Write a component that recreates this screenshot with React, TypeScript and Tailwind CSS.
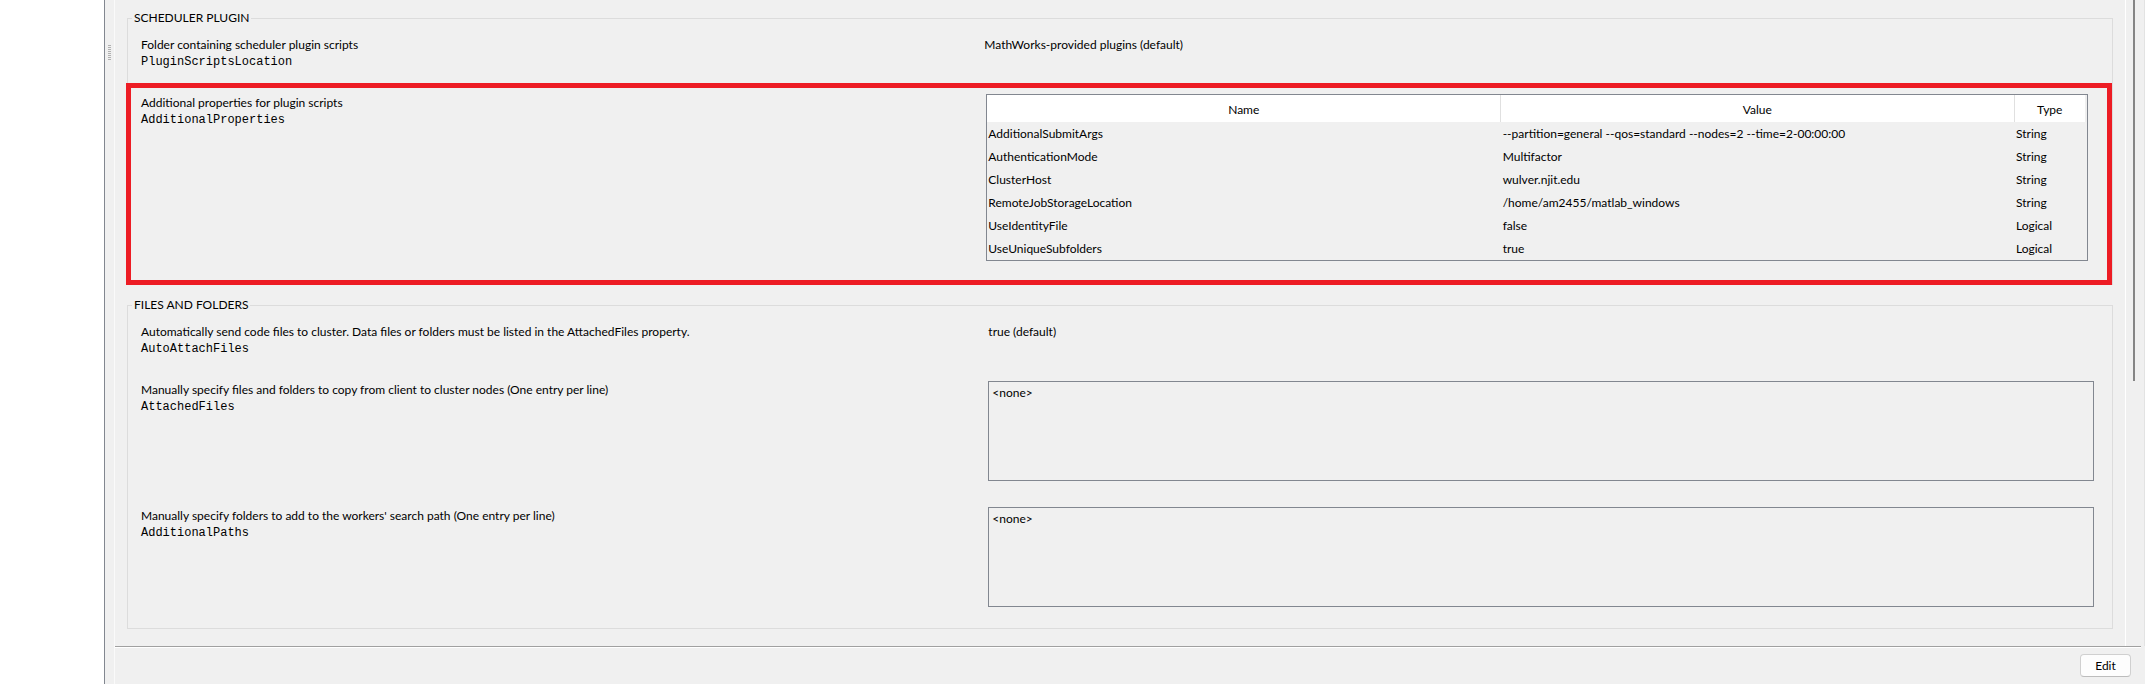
import type { ReactNode } from 'react';

const properties = [
  ['AdditionalSubmitArgs', '--partition=general --qos=standard --nodes=2 --time=2-00:00:00', 'String'],
  ['AuthenticationMode', 'Multifactor', 'String'],
  ['ClusterHost', 'wulver.njit.edu', 'String'],
  ['RemoteJobStorageLocation', '/home/am2455/matlab_windows', 'String'],
  ['UseIdentityFile', 'false', 'Logical'],
  ['UseUniqueSubfolders', 'true', 'Logical'],
];

function Caption({ text, name, htmlFor }: { text: string; name: string; htmlFor?: string }) {
  const content = (
    <>
      <span className="block">{text}</span>
      <span className="block pt-px font-['Liberation_Mono',monospace]">{name}</span>
    </>
  );
  return htmlFor ? (
    <label htmlFor={htmlFor} className="block pt-px">{content}</label>
  ) : (
    <div>{content}</div>
  );
}

function Row({ children }: { children: ReactNode }) {
  return <div className="grid grid-cols-[19fr_25fr] pr-[18px] pl-[13px]">{children}</div>;
}

function Group({ title, children }: { title: string; children: ReactNode }) {
  return (
    <fieldset className="min-w-0 border border-[#dcdcdc]">
      <legend className="ml-1 px-0.5">{title}</legend>
      {children}
    </fieldset>
  );
}

function ListBox({ id }: { id: string }) {
  return (
    <div className="pl-1">
      <textarea
        id={id}
        readOnly
        defaultValue="<none>"
        className="block h-[100px] w-full resize-none border border-[#828790] bg-transparent px-[3px] py-[3px] outline-none"
      />
    </div>
  );
}

function PropertiesTable() {
  return (
    <div className="mr-1.5 ml-0.5 border border-[#828790]">
      <table className="w-full table-fixed border-collapse text-left">
        <colgroup>
          <col />
          <col />
          <col className="w-[72px]" />
        </colgroup>
        <thead>
          <tr className="h-[27px] bg-white">
            <th className="border-r border-[#e0e0e0] p-0 pt-0.5 text-center font-normal">Name</th>
            <th className="border-r border-[#e0e0e0] p-0 pt-0.5 text-center font-normal">Value</th>
            <th className="border-r-2 border-[#efefef] p-0 pt-0.5 text-center font-normal">Type</th>
          </tr>
        </thead>
        <tbody>
          {properties.map(([name, value, type]) => (
            <tr key={name} className="h-[23px]">
              <td className="p-0 pl-px">{name}</td>
              <td className="p-0 pl-0.5">{value}</td>
              <td className="p-0 pl-0.5">{type}</td>
            </tr>
          ))}
        </tbody>
      </table>
    </div>
  );
}

export default function App() {
  return (
    <div className="flex min-h-screen bg-[#f0f0f0] font-['Lato',sans-serif] text-[12px] leading-[16px] text-black">
      <aside className="w-[104px] shrink-0 bg-white" />
      <div className="w-[11px] shrink-0 border-r border-l border-r-[#fafafa] border-l-[#828790] pt-[45px]">
        <div className="ml-[3px] flex w-[3px] flex-col gap-px">
          {[0, 1, 2, 3, 4, 5, 6, 7].map((n) => (
            <span key={n} className="h-px bg-[#b0b0b0]" />
          ))}
        </div>
      </div>

      <div className="flex min-w-0 flex-1 flex-col">
        <div className="flex flex-1">
          <main className="min-w-0 flex-1 border-r border-white pt-[10px] pr-3 pb-4 pl-3">
            <Group title="SCHEDULER PLUGIN">
              <div className="pt-[11px] pb-[13px]">
                <Row>
                  <Caption text="Folder containing scheduler plugin scripts" name="PluginScriptsLocation" />
                  <p>MathWorks-provided plugins (default)</p>
                </Row>
              </div>
              <div className="-mb-px -ml-0.5 border-[5px] border-[#ed1c24] pt-1.5 pb-[19px]">
                <div className="-mr-[5px] -ml-[3px]">
                  <Row>
                    <div className="pt-px">
                      <Caption text="Additional properties for plugin scripts" name="AdditionalProperties" />
                    </div>
                    <PropertiesTable />
                  </Row>
                </div>
              </div>
            </Group>

            <div className="mt-3">
              <Group title="FILES AND FOLDERS">
                <div className="pt-[11px] pb-[21px]">
                  <Row>
                    <Caption
                      text="Automatically send code files to cluster. Data files or folders must be listed in the AttachedFiles property."
                      name="AutoAttachFiles"
                    />
                    <p className="pl-1">true (default)</p>
                  </Row>
                  <div className="mt-6 flex flex-col gap-[26px]">
                    <Row>
                      <Caption
                        htmlFor="attached-files"
                        text="Manually specify files and folders to copy from client to cluster nodes (One entry per line)"
                        name="AttachedFiles"
                      />
                      <ListBox id="attached-files" />
                    </Row>
                    <Row>
                      <Caption
                        htmlFor="additional-paths"
                        text="Manually specify folders to add to the workers' search path (One entry per line)"
                        name="AdditionalPaths"
                      />
                      <ListBox id="additional-paths" />
                    </Row>
                  </div>
                </div>
              </Group>
            </div>
          </main>
          <div className="flex w-[19px] shrink-0 border-r border-[#e3e3e3]">
            <div className="ml-[7px] h-[381px] w-0.5 bg-[#858585]" />
          </div>
        </div>
        <footer className="mr-1 flex justify-end border-t border-[#a0a0a0] pr-[10px] pb-[7px] shadow-[inset_0_1px_0_#ffffff]">
          <button
            type="button"
            className="mt-[7px] h-[23px] w-[51px] rounded border border-[#d0d0d0] border-b-[#bcbcbc] bg-[#fdfdfd]"
          >
            Edit
          </button>
        </footer>
      </div>
    </div>
  );
}
